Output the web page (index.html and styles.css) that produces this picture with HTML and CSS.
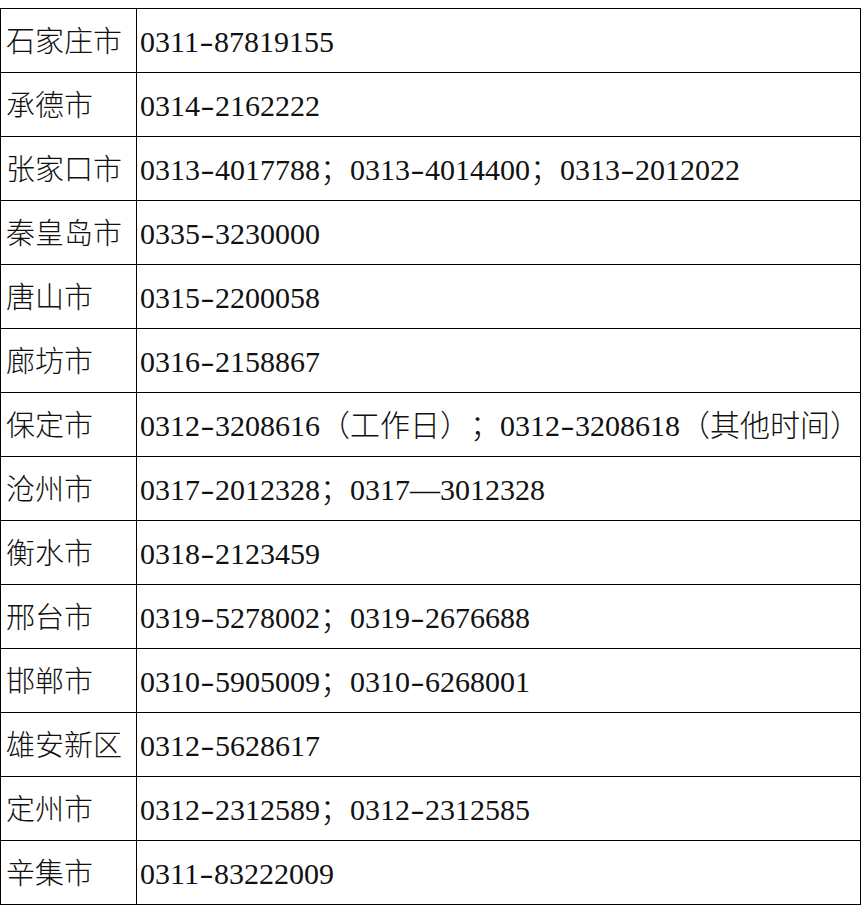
FILE: index.html
```html
<!DOCTYPE html>
<html lang="zh-CN">
<head>
<meta charset="utf-8">
<title>热线电话</title>
<link rel="stylesheet" href="styles.css">
</head>
<body>
<table class="hotline">
  <colgroup><col class="c-city"><col class="c-tel"></colgroup>
  <tbody>
    <tr><td class="city">石家庄市</td><td class="tel">0311<span class="h">-</span>87819155</td></tr>
    <tr><td class="city">承德市</td><td class="tel">0314<span class="h">-</span>2162222</td></tr>
    <tr><td class="city">张家口市</td><td class="tel">0313<span class="h">-</span>4017788；0313<span class="h">-</span>4014400；0313<span class="h">-</span>2012022</td></tr>
    <tr><td class="city">秦皇岛市</td><td class="tel">0335<span class="h">-</span>3230000</td></tr>
    <tr><td class="city">唐山市</td><td class="tel">0315<span class="h">-</span>2200058</td></tr>
    <tr><td class="city">廊坊市</td><td class="tel">0316<span class="h">-</span>2158867</td></tr>
    <tr><td class="city">保定市</td><td class="tel">0312<span class="h">-</span>3208616（工作日）；0312<span class="h">-</span>3208618（其他时间）</td></tr>
    <tr><td class="city">沧州市</td><td class="tel">0317<span class="h">-</span>2012328；0317—3012328</td></tr>
    <tr><td class="city">衡水市</td><td class="tel">0318<span class="h">-</span>2123459</td></tr>
    <tr><td class="city">邢台市</td><td class="tel">0319<span class="h">-</span>5278002；0319<span class="h">-</span>2676688</td></tr>
    <tr><td class="city">邯郸市</td><td class="tel">0310<span class="h">-</span>5905009；0310<span class="h">-</span>6268001</td></tr>
    <tr><td class="city">雄安新区</td><td class="tel">0312<span class="h">-</span>5628617</td></tr>
    <tr><td class="city">定州市</td><td class="tel">0312<span class="h">-</span>2312589；0312<span class="h">-</span>2312585</td></tr>
    <tr><td class="city">辛集市</td><td class="tel">0311<span class="h">-</span>83222009</td></tr>
  </tbody>
</table>
</body>
</html>
```

FILE: styles.css
```css
html, body {
  background: #ffffff;
}
body {
  margin: 8px 0 0 0;
  font-family: "Liberation Serif", "Noto Sans CJK SC", serif;
  color: #111111;
}
.hotline {
  border-collapse: collapse;
  table-layout: fixed;
  width: 861px;
}
.c-city { width: 136px; }
.hotline td {
  border: 1px solid #000000;
  font-size: 30px;
  line-height: 60px;
  padding: 3px 0 0 3px;
  white-space: nowrap;
  vertical-align: top;
  font-weight: 300;
  text-spacing-trim: space-all;
}
.hotline td.city {
  padding-left: 5px;
  font-size: 29px;
}
.h {
  display: inline-block;
  width: 0.5em;
  text-align: center;
  transform: scaleX(1.4);
}
```
